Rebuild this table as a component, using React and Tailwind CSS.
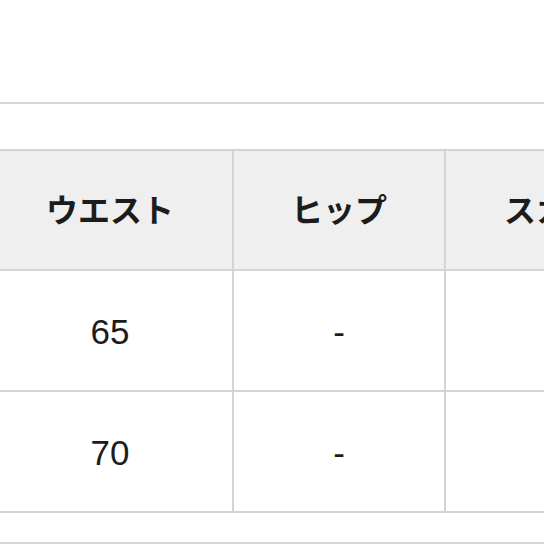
export default function App() {
  const font = { fontFamily: '"Liberation Sans", "Noto Sans CJK JP", sans-serif' };
  const headers = ["ウエスト", "ヒップ", "スカート丈"];
  const rows = [
    ["65", "-", ""],
    ["70", "-", ""],
  ];
  const widths = ["w-[246px]", "w-[212px]", "w-[278px]"];
  return (
    <div className="w-[544px] h-[544px] overflow-hidden bg-white text-[#1c1c1c]" style={font}>
      <div className="h-[102px]" />
      <div className="h-[2px] bg-[#d6d6d6]" />
      <div className="h-[45px]" />
      <div className="ml-[-14px] w-[760px] border-t-2 border-[#d4d4d4]">
        <div className="flex h-[120px] bg-[#efefef] border-b-2 border-[#d4d4d4]">
          {headers.map((h, i) => (
            <div
              key={i}
              className={`${widths[i]} shrink-0 border-l-2 border-[#d4d4d4] flex items-center justify-center text-[32px] font-bold pt-[1px]`}
            >
              {h}
            </div>
          ))}
        </div>
        {rows.map((r, ri) => (
          <div key={ri} className="flex h-[121px] border-b-2 border-[#d4d4d4]">
            {r.map((c, i) => (
              <div
                key={i}
                className={`${widths[i]} shrink-0 border-l-2 border-[#d4d4d4] flex items-center justify-center text-[35px] pt-[4px]`}
              >
                {c}
              </div>
            ))}
          </div>
        ))}
      </div>
      <div className="h-[29px]" />
      <div className="h-[2px] bg-[#d6d6d6]" />
    </div>
  );
}
